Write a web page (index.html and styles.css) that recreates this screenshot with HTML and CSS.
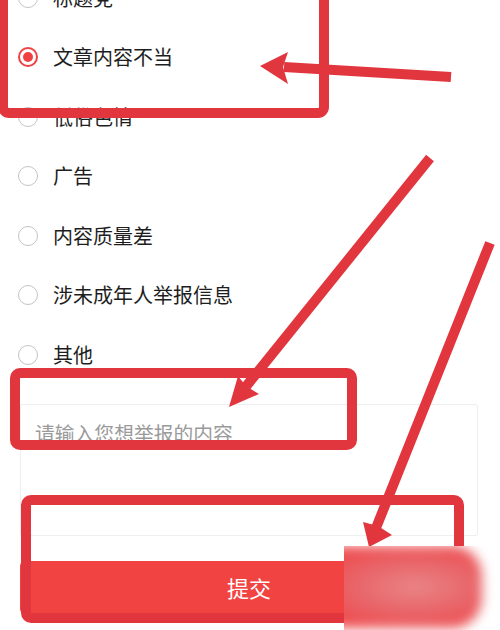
FILE: index.html
```html
<!DOCTYPE html>
<html>
<head>
<meta charset="utf-8">
<meta name="viewport" content="width=device-width, initial-scale=1">
<link rel="stylesheet" href="styles.css">
</head>
<body>

  <div class="page">
    <ul class="reasons">
      <li class="reason"><span class="radio"></span><span class="label">标题党</span></li>
      <li class="reason"><span class="radio checked"></span><span class="label">文章内容不当</span></li>
      <li class="reason"><span class="radio"></span><span class="label">低俗色情</span></li>
      <li class="reason"><span class="radio"></span><span class="label">广告</span></li>
      <li class="reason"><span class="radio"></span><span class="label">内容质量差</span></li>
      <li class="reason"><span class="radio"></span><span class="label">涉未成年人举报信息</span></li>
      <li class="reason"><span class="radio"></span><span class="label">其他</span></li>
    </ul>

    <textarea class="detail" placeholder="请输入您想举报的内容"></textarea>

    <button class="submit">提交</button>
  </div>

  <!-- red marks drawn over the screenshot -->
  <svg class="marks" width="500" height="630" viewBox="0 0 500 630">
    <g fill="none" stroke="#e2363f" stroke-width="10" stroke-linejoin="round">
      <rect x="3" y="-20" width="321" height="133" rx="6"></rect>
      <rect x="15" y="373" width="337" height="72" rx="5"></rect>
      <rect x="26" y="500" width="433" height="118" rx="5"></rect>
    </g>
    <g stroke="#e2363f" stroke-width="10">
      <line x1="451" y1="77" x2="284" y2="67"></line>
      <line x1="430" y1="158" x2="244" y2="389"></line>
      <line x1="490" y1="243" x2="376" y2="528"></line>
    </g>
    <g fill="#e2363f">
      <polygon points="260,66 288,52 283,67 288,84"></polygon>
      <polygon points="229,407 238,376 246,386 259,394"></polygon>
      <polygon points="369,547 363,522 378,526 392,535"></polygon>
    </g>
  </svg>

  <div class="smudge"><div class="smudge-fill"></div></div>

</body>
</html>
```

FILE: styles.css
```css
* {
  box-sizing: border-box;
}

body {
  margin: 0;
  width: 500px;
  height: 630px;
  overflow: hidden;
  background-color: white;
  font-family: "Noto Sans CJK SC", "Noto Sans", sans-serif;
  position: relative;
}

.page {
  display: flex;
  flex-direction: column;
}

/* list of report reasons, scrolled up a little */
.reasons {
  list-style: none;
  margin: -32px 0 0 0;
  padding: 0 0 0 18px;
}

.reason {
  height: 59.5px;
  display: flex;
  align-items: center;
  gap: 15px;
}

.radio {
  width: 20px;
  height: 20px;
  border-radius: 50%;
  border: 1.5px solid #c4c4c4;
  display: flex;
  align-items: center;
  justify-content: center;
}

.radio.checked {
  border: 2px solid #f04142;
}

.radio.checked::after {
  content: "";
  width: 10px;
  height: 10px;
  border-radius: 50%;
  background-color: #f04142;
}

.label {
  font-size: 20px;
  color: #1e1e1e;
  line-height: 28px;
}

/* free text box */
.detail {
  margin: 19px 20px 0 20px;
  width: 458px;
  height: 132px;
  border: 1px solid #eeeeee;
  border-radius: 2px;
  padding: 14px 14px;
  font-family: inherit;
  font-size: 19.8px;
  line-height: 28px;
  resize: none;
  outline: none;
}

.detail::placeholder {
  color: #9a9a9a;
}

.submit {
  margin: 25px 20px 0 20px;
  width: 458px;
  height: 53px;
  border: none;
  border-radius: 5px;
  background-color: #f24343;
  color: white;
  font-family: inherit;
  font-size: 22px;
}

.marks {
  position: absolute;
  left: 0;
  top: 0;
  pointer-events: none;
}

/* blurred watermark in the corner */
.smudge {
  position: absolute;
  left: 344px;
  top: 546px;
  width: 156px;
  height: 84px;
  overflow: hidden;
  background-color: white;
}

.smudge-fill {
  position: absolute;
  left: -30px;
  top: 0;
  width: 168px;
  height: 82px;
  border-radius: 30px;
  background: radial-gradient(ellipse at 60% 50%, #ea8587 0%, #e8676b 40%, #ef4749 85%);
  filter: blur(6px);
}
```
